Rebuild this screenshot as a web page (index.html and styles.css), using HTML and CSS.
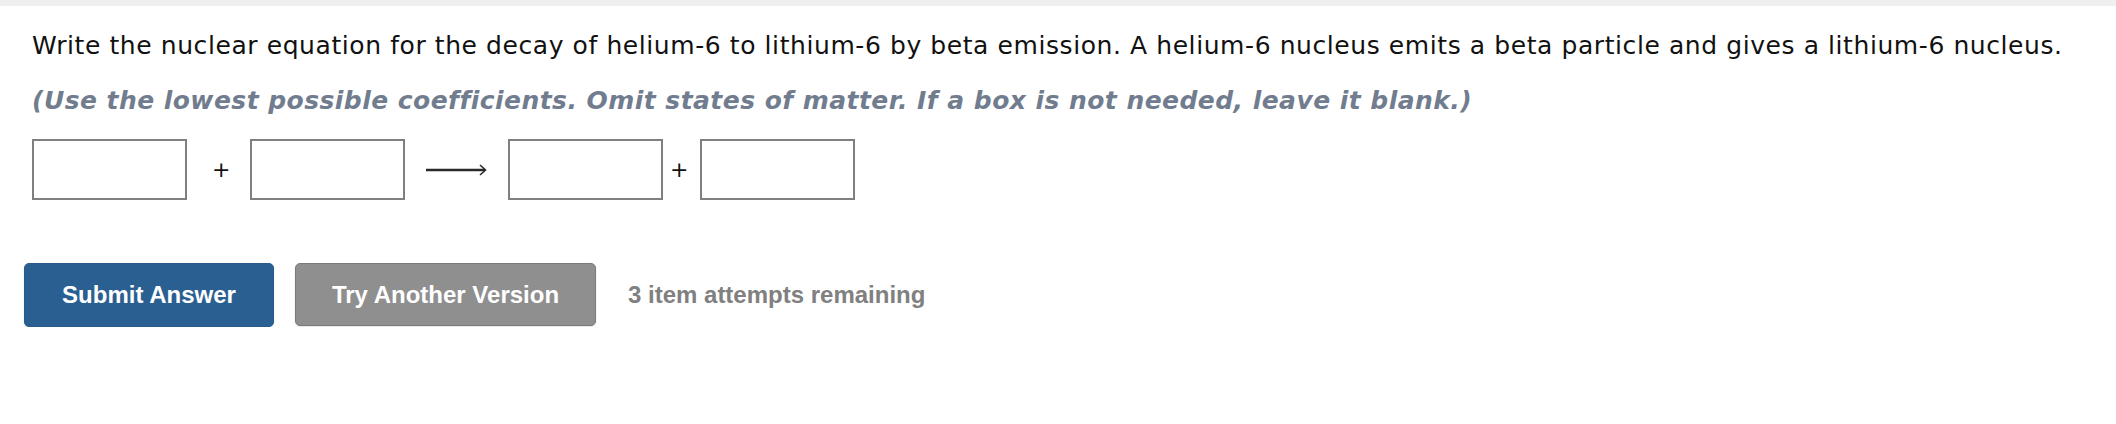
FILE: index.html
```html
<!DOCTYPE html>
<html>
<head>
<meta charset="utf-8">
<link rel="stylesheet" href="styles.css">
</head>
<body>
<div class="topband"></div>
<main class="question">
  <p class="prompt">Write the nuclear equation for the decay of helium-6 to lithium-6 by beta emission. A helium-6 nucleus emits a beta particle and gives a lithium-6 nucleus.</p>
  <p class="hint">(Use the lowest possible coefficients. Omit states of matter. If a box is not needed, leave it blank.)</p>
  <div class="equation">
    <span class="box"></span>
    <span class="op op-a">+</span>
    <span class="box"></span>
    <svg class="arrow" width="61" height="14" viewBox="0 0 61 14">
      <line x1="0" y1="7" x2="59" y2="7" stroke="#2a2a2a" stroke-width="2.4"/>
      <path d="M54 2 L59.5 7 L54 12" fill="none" stroke="#2a2a2a" stroke-width="1.6"/>
    </svg>
    <span class="box"></span>
    <span class="op op-b">+</span>
    <span class="box"></span>
  </div>
  <div class="actions">
    <button class="btn btn-submit">Submit Answer</button>
    <button class="btn btn-try">Try Another Version</button>
    <span class="attempts">3 item attempts remaining</span>
  </div>
</main>
</body>
</html>
```
FILE: styles.css
```css
html, body {
  margin: 0;
  padding: 0;
  background: #ffffff;
}

.topband {
  height: 6px;
  background: #efefef;
}

.question {
  padding-left: 32px;
  display: flex;
  flex-direction: column;
  align-items: flex-start;
}

.prompt {
  margin: 0;
  margin-top: 25px;
  font-family: "DejaVu Sans", Verdana, sans-serif;
  font-size: 25px;
  letter-spacing: 0.58px;
  line-height: 30px;
  color: #111111;
  white-space: nowrap;
}

.hint {
  margin: 0;
  margin-top: 25px;
  font-family: "DejaVu Sans", Verdana, sans-serif;
  font-size: 25px;
  letter-spacing: 0.45px;
  line-height: 30px;
  font-weight: bold;
  font-style: italic;
  color: #717d8f;
  white-space: nowrap;
}

.equation {
  margin-top: 23px;
  display: flex;
  align-items: center;
  height: 61px;
}

.box {
  display: block;
  width: 151px;
  height: 57px;
  border: 2px solid #808080;
  background: #ffffff;
}

.op {
  font-family: "DejaVu Sans", Verdana, sans-serif;
  font-size: 22px;
  line-height: 22px;
  color: #111111;
  width: 16px;
  text-align: center;
}

.op-a {
  margin: 0 22px 0 25px;
}

.op-b {
  margin: 0 14px 0 7px;
}

.arrow {
  display: block;
  margin: 0 21px 0 21px;
}

.actions {
  margin-top: 63px;
  margin-left: -8px;
  display: flex;
  align-items: flex-start;
}

.btn {
  font-family: "Liberation Sans", Arial, sans-serif;
  font-weight: bold;
  font-size: 24px;
  letter-spacing: 0;
  color: #ffffff;
  border-radius: 5px;
  cursor: pointer;
  display: flex;
  align-items: center;
  justify-content: center;
  padding: 0;
}

.btn-submit {
  width: 250px;
  height: 64px;
  background: #2a5f91;
  border: 1px solid #285a8a;
  box-shadow: 0 1px 2px rgba(0, 0, 0, 0.12);
}

.btn-try {
  margin-left: 21px;
  width: 301px;
  height: 63px;
  background: #8f8f8f;
  border: 1px solid #7b7b7b;
  box-shadow: 0 1px 2px rgba(0, 0, 0, 0.12);
}

.attempts {
  margin-left: 32px;
  align-self: center;
  font-family: "Liberation Sans", Arial, sans-serif;
  font-weight: bold;
  font-size: 24px;
  letter-spacing: 0;
  color: #808080;
}
```
